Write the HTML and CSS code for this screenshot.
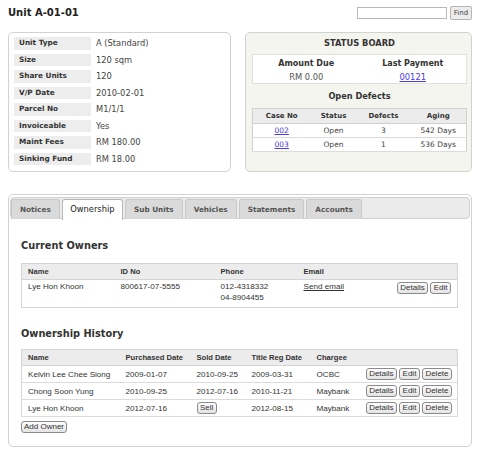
FILE: index.html
```html
<!DOCTYPE html>
<html lang="en">
<head>
<meta charset="utf-8">
<title>Unit A-01-01</title>
<link rel="stylesheet" href="styles.css">
</head>
<body>
<div class="page">
  <header class="topbar">
    <h1 class="title">Unit A-01-01</h1>
    <form class="search">
      <input class="search-input" type="text">
      <button class="btn-find" type="button">Find</button>
    </form>
  </header>

  <div class="cards">
    <section class="card info">
      <dl class="info-grid">
        <dt>Unit Type</dt><dd>A (Standard)</dd>
        <dt>Size</dt><dd>120 sqm</dd>
        <dt>Share Units</dt><dd>120</dd>
        <dt>V/P Date</dt><dd>2010-02-01</dd>
        <dt>Parcel No</dt><dd>M1/1/1</dd>
        <dt>Invoiceable</dt><dd>Yes</dd>
        <dt>Maint Fees</dt><dd>RM 180.00</dd>
        <dt>Sinking Fund</dt><dd>RM 18.00</dd>
      </dl>
    </section>

    <section class="card status">
      <h2 class="status-title">STATUS BOARD</h2>
      <div class="status-box">
        <div class="stat">
          <div class="stat-label">Amount Due</div>
          <div class="stat-value">RM 0.00</div>
        </div>
        <div class="stat">
          <div class="stat-label">Last Payment</div>
          <div class="stat-value"><a class="link" href="#">00121</a></div>
        </div>
      </div>
      <h3 class="defects-title">Open Defects</h3>
      <table class="defects">
        <colgroup><col class="c-case"><col class="c-status"><col class="c-defects"><col></colgroup>
        <thead>
          <tr><th>Case No</th><th>Status</th><th>Defects</th><th>Aging</th></tr>
        </thead>
        <tbody>
          <tr><td><a class="link" href="#">002</a></td><td>Open</td><td>3</td><td>542 Days</td></tr>
          <tr><td><a class="link" href="#">003</a></td><td>Open</td><td>1</td><td>536 Days</td></tr>
        </tbody>
      </table>
    </section>
  </div>

  <section class="card tabs">
    <ul class="tab-nav">
      <li class="tab">Notices</li>
      <li class="tab active">Ownership</li>
      <li class="tab">Sub Units</li>
      <li class="tab">Vehicles</li>
      <li class="tab">Statements</li>
      <li class="tab">Accounts</li>
    </ul>
    <div class="tab-panel">
      <h2 class="section-title first">Current Owners</h2>
      <table class="grid owners">
        <colgroup><col class="o-name"><col class="o-id"><col class="o-phone"><col><col class="o-act"></colgroup>
        <thead>
          <tr><th>Name</th><th>ID No</th><th>Phone</th><th>Email</th><th></th></tr>
        </thead>
        <tbody>
          <tr>
            <td>Lye Hon Khoon</td>
            <td>800617-07-5555</td>
            <td>012-4318332<br>04-8904455</td>
            <td><a class="mail" href="#">Send email</a></td>
            <td><div class="actions"><button class="btn" type="button">Details</button><button class="btn" type="button">Edit</button></div></td>
          </tr>
        </tbody>
      </table>

      <h2 class="section-title second">Ownership History</h2>
      <table class="grid history">
        <colgroup><col class="h-name"><col class="h-pur"><col class="h-sold"><col class="h-title"><col class="h-charge"><col></colgroup>
        <thead>
          <tr><th>Name</th><th>Purchased Date</th><th>Sold Date</th><th>Title Reg Date</th><th>Chargee</th><th></th></tr>
        </thead>
        <tbody>
          <tr>
            <td>Kelvin Lee Chee Siong</td><td>2009-01-07</td><td>2010-09-25</td><td>2009-03-31</td><td>OCBC</td>
            <td><div class="actions"><button class="btn" type="button">Details</button><button class="btn" type="button">Edit</button><button class="btn" type="button">Delete</button></div></td>
          </tr>
          <tr>
            <td>Chong Soon Yung</td><td>2010-09-25</td><td>2012-07-16</td><td>2010-11-21</td><td>Maybank</td>
            <td><div class="actions"><button class="btn" type="button">Details</button><button class="btn" type="button">Edit</button><button class="btn" type="button">Delete</button></div></td>
          </tr>
          <tr>
            <td>Lye Hon Khoon</td><td>2012-07-16</td><td><button class="btn" type="button">Sell</button></td><td>2012-08-15</td><td>Maybank</td>
            <td><div class="actions"><button class="btn" type="button">Details</button><button class="btn" type="button">Edit</button><button class="btn" type="button">Delete</button></div></td>
          </tr>
        </tbody>
      </table>
      <button class="btn add" type="button">Add Owner</button>
    </div>
  </section>
</div>
</body>
</html>
```

FILE: styles.css
```css
* { box-sizing: border-box; }

html, body {
  margin: 0;
  padding: 0;
  background: #fff;
}

body {
  font-family: "DejaVu Sans", Verdana, sans-serif;
  font-size: 8.3px;
  color: #333;
}

.page {
  padding: 0 9px 0 8px;
}

/* top bar */
.topbar {
  display: flex;
  justify-content: space-between;
  align-items: center;
  height: 14px;
  margin-top: 6px;
}

.title {
  margin: 0;
  font-size: 10px;
  line-height: 14px;
  font-weight: bold;
  color: #222;
}

.search {
  display: flex;
  align-items: center;
  margin: 0;
}

.search-input {
  width: 90px;
  height: 12px;
  border: 1px solid #b8b8b8;
  padding: 0;
  margin: 0;
  background: #fff;
}

.btn-find {
  margin-left: 3px;
  width: 22px;
  height: 14px;
  padding: 0;
  font-family: "DejaVu Sans", Verdana, sans-serif;
  font-size: 7px;
  color: #444;
  background: #ececec;
  border: 1px solid #b5b5b5;
  border-radius: 2px;
}

/* cards */
.cards {
  display: flex;
  gap: 14px;
  margin-top: 12px;
}

.card {
  border: 1px solid #d2d2d2;
  border-radius: 5px;
  background: #fff;
}

.info {
  width: 223px;
  padding: 4px 5px 6px 5px;
}

.info-grid {
  display: grid;
  grid-template-columns: 77px 1fr;
  grid-auto-rows: 12.5px;
  row-gap: 4px;
  column-gap: 5px;
  margin: 0;
}

.info-grid dt {
  background: #ededed;
  font-weight: bold;
  font-size: 7.3px;
  line-height: 12.5px;
  padding-left: 5px;
  color: #333;
}

.info-grid dd {
  margin: 0;
  font-size: 8.3px;
  line-height: 12.5px;
  color: #444;
}

.status {
  width: 227px;
  background: #f5f5f0;
  padding: 0 4px 0 6px;
}

.status-title {
  margin: 0;
  font-size: 8.3px;
  font-weight: bold;
  line-height: 21px;
  text-align: center;
  color: #333;
}

.status-box {
  display: grid;
  grid-template-columns: 1fr 1fr;
  height: 30px;
  padding-top: 3px;
  background: #fff;
  border: 1px solid #e0e0dc;
  text-align: center;
}

.stat-label {
  font-weight: bold;
  font-size: 8px;
  line-height: 12.5px;
  color: #333;
}

.stat-value {
  font-size: 8.3px;
  line-height: 12.5px;
  color: #555;
}

.link {
  color: #4a3ae0;
  text-decoration: underline;
}

.defects-title {
  margin: 0;
  font-size: 8.2px;
  font-weight: bold;
  line-height: 24px;
  text-align: center;
  color: #333;
}

.defects {
  width: 100%;
  table-layout: fixed;
  border-collapse: collapse;
  background: #fff;
  border: 1px solid #d0d0d0;
  font-size: 7.5px;
  color: #444;
}

.c-case { width: 58px; }
.c-status { width: 46px; }
.c-defects { width: 54px; }

.defects th {
  background: #ececec;
  font-size: 7px;
  font-weight: bold;
  height: 15px;
  padding: 0;
  color: #333;
  border-bottom: 1px solid #d0d0d0;
}

.defects td {
  height: 14px;
  padding: 0;
  text-align: center;
  border-bottom: 1px solid #dcdcdc;
}

/* tabs */
.tabs {
  margin-top: 22px;
  padding: 2px 1px 13px 1px;
}

.tab-nav {
  display: flex;
  list-style: none;
  margin: 0;
  padding: 1px 0 0 0;
  height: 22px;
  background: #ebebeb;
  border: 1px solid #d0d0d0;
  border-radius: 4px;
}

.tab {
  height: 20px;
  margin-right: 2px;
  padding: 0 8px;
  line-height: 19px;
  font-size: 7.3px;
  font-weight: bold;
  color: #555;
  background: #dadada;
  border: 1px solid #c8c8c8;
  border-bottom: none;
  border-radius: 3px 3px 0 0;
}

.tab.active {
  height: 21px;
  padding: 0 7.5px;
  background: #fff;
  border-color: #b8b8b8;
  font-weight: normal;
  font-size: 8.3px;
  color: #222;
}

.tab-panel {
  padding: 0 12px 0 11px;
  background: #fff;
}

.section-title {
  margin: 0;
  font-size: 9.8px;
  line-height: 14px;
  font-weight: bold;
  color: #333;
}

.section-title.first {
  padding-top: 20px;
  padding-bottom: 10px;
}

.section-title.second {
  padding-top: 19px;
  padding-bottom: 8px;
}

.grid {
  width: 100%;
  table-layout: fixed;
  border-collapse: collapse;
  border: 1px solid #d4d4d4;
  font-family: "Liberation Sans", Arial, sans-serif;
  font-size: 8.1px;
  color: #333;
}

.grid th {
  background: #ececec;
  font-weight: bold;
  font-size: 7.6px;
  text-align: left;
  height: 16px;
  padding: 0 0 0 6px;
  border-bottom: 1px solid #d4d4d4;
  color: #333;
}

.grid td {
  padding: 0 0 0 6px;
  text-align: left;
}

.o-name { width: 93px; }
.o-id { width: 100px; }
.o-phone { width: 83px; }
.o-act { width: 62px; }

.owners td {
  vertical-align: top;
  padding-top: 2px;
  padding-bottom: 4px;
  line-height: 10.5px;
}

.owners td:last-child {
  padding-right: 6px;
  padding-top: 2px;
}

.h-name { width: 98px; }
.h-pur { width: 71px; }
.h-sold { width: 55px; }
.h-title { width: 65px; }
.h-charge { width: 51px; }

.history td {
  height: 17px;
  border-bottom: 1px solid #dcdcdc;
  vertical-align: middle;
}

.history td:last-child {
  padding-right: 5px;
}

.actions {
  display: flex;
  justify-content: flex-end;
  gap: 2px;
}

.mail {
  color: #333;
  text-decoration: underline;
}

.btn {
  height: 12px;
  padding: 0 2.5px;
  margin: 0;
  font-family: "Liberation Sans", Arial, sans-serif;
  font-size: 8px;
  line-height: 10px;
  color: #333;
  background: linear-gradient(#fdfdfd, #e4e4e4);
  border: 1px solid #8a8a8a;
  border-radius: 3px;
}

.btn.add {
  margin-top: 4px;
  padding: 0 2px;
}
```
